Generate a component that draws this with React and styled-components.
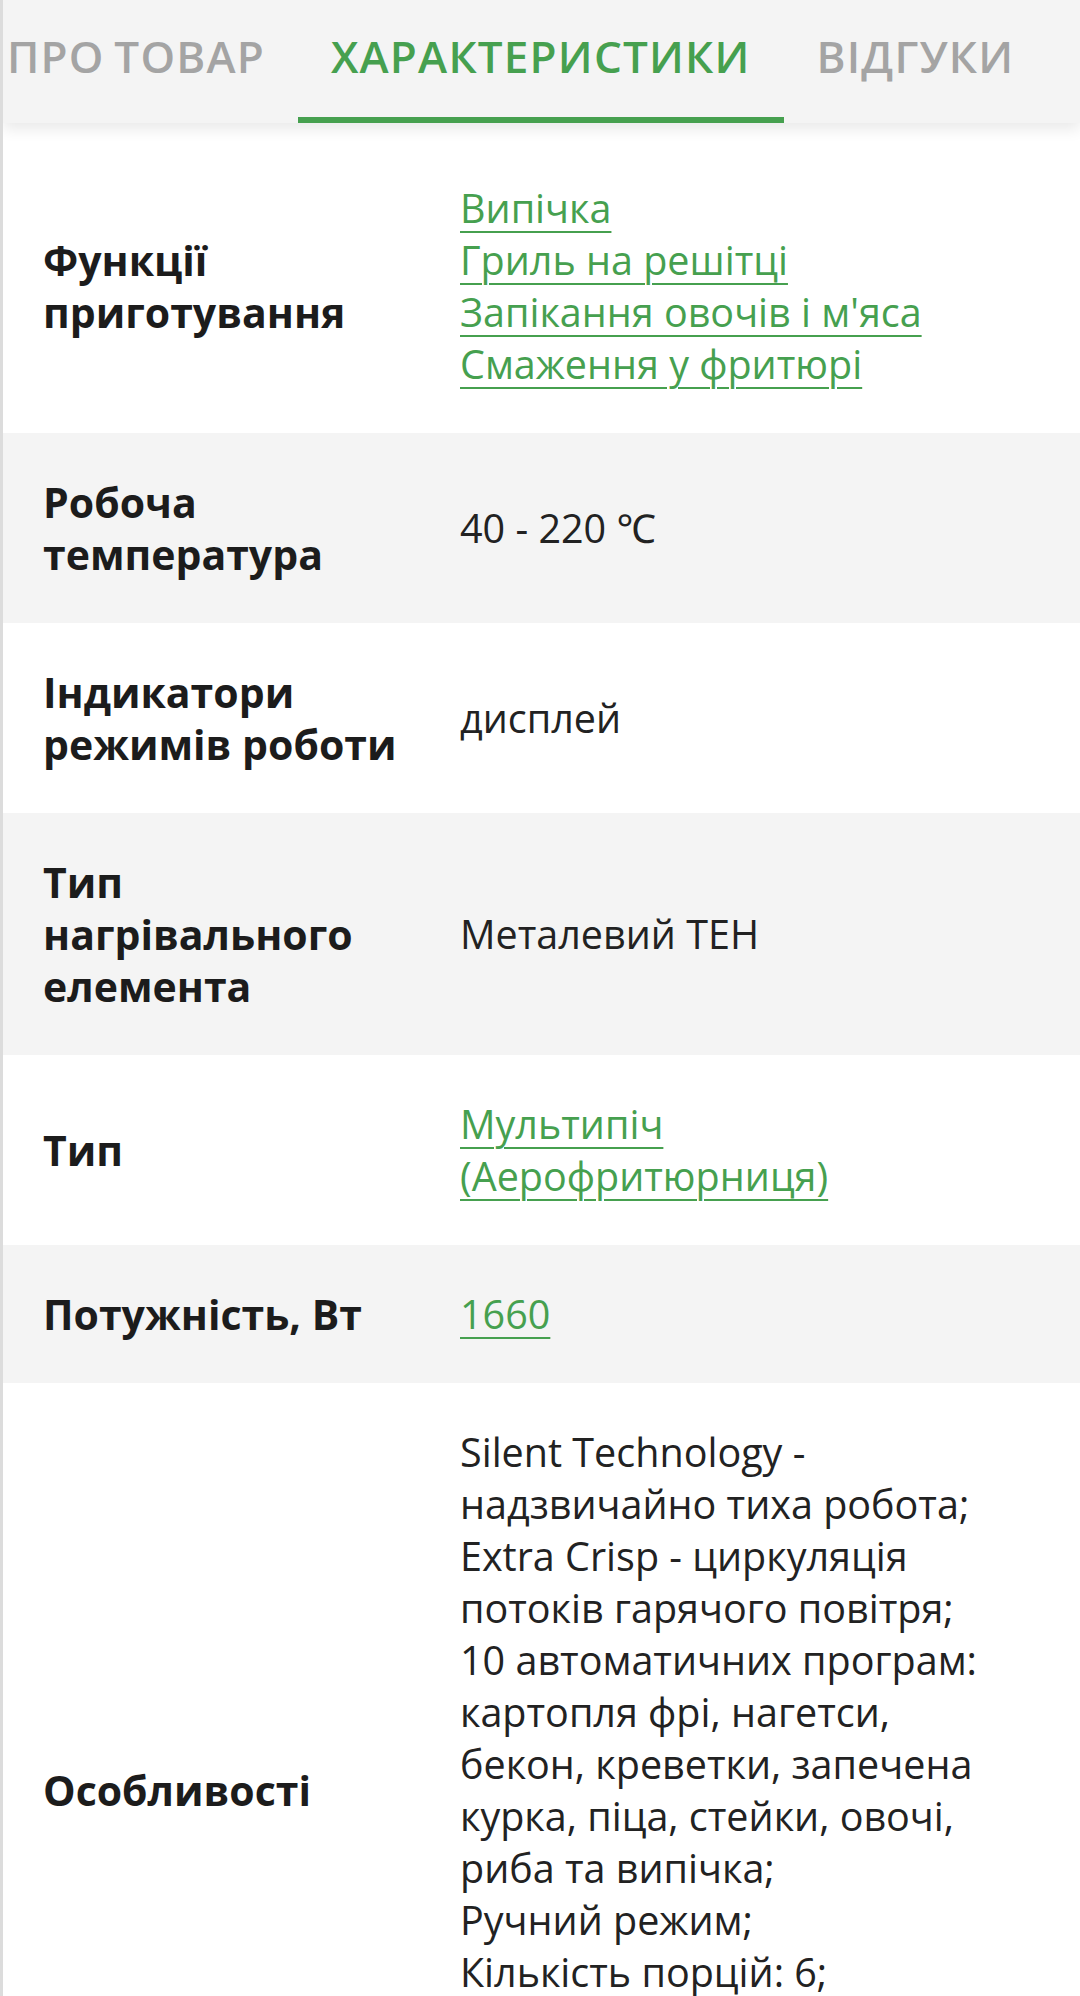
import React from 'react';
import styled, { createGlobalStyle } from 'styled-components';

const GlobalStyle = createGlobalStyle`
  html, body {
    margin: 0;
    padding: 0;
    background: #fff;
  }
  body {
    font-family: 'Open Sans', 'Noto Sans', sans-serif;
    color: #1f1f1f;
  }
`;

const tabs = ['Про товар', 'Характеристики', 'Відгуки'];

const specs = [
  {
    label: 'Функції приготування',
    links: ['Випічка', 'Гриль на решітці', "Запікання овочів і м'яса", 'Смаження у фритюрі'],
  },
  { label: 'Робоча температура', text: ['40 - 220 ℃'] },
  { label: 'Індикатори режимів роботи', text: ['дисплей'] },
  { label: 'Тип нагрівального елемента', text: ['Металевий ТЕН'] },
  { label: 'Тип', links: ['Мультипіч (Аерофритюрниця)'] },
  { label: 'Потужність, Вт', links: ['1660'] },
  {
    label: 'Особливості',
    text: [
      'Silent Technology - надзвичайно тиха робота;',
      'Extra Crisp - циркуляція потоків гарячого повітря;',
      '10 автоматичних програм: картопля фрі, нагетси, бекон, креветки, запечена курка, піца, стейки, овочі, риба та випічка;',
      'Ручний режим;',
      'Кількість порцій: 6;',
      'Таймер до 60 хвилин;',
      'Кошик з антипригарним покриттям;',
    ],
  },
];

export default function App() {
  return (
    <Page>
      <GlobalStyle />
      <TabBar>
        <TabStrip>
          {tabs.map((t, i) => (
            <Tab key={t} active={i === 1}>{t}</Tab>
          ))}
        </TabStrip>
      </TabBar>
      <SpecTable>
        {specs.map((row, i) => (
          <Row key={row.label} striped={i % 2 === 1}>
            <Label>{row.label}</Label>
            <Value>
              {row.links &&
                row.links.map((l) => (
                  <Link key={l} href="#">{l}</Link>
                ))}
              {row.text && row.text.map((t) => <Line key={t}>{t}</Line>)}
            </Value>
          </Row>
        ))}
      </SpecTable>
    </Page>
  );
}

const Page = styled.div`
  height: 1996px;
  border-left: 3px solid #dcdcdc;
  box-sizing: border-box;
  overflow: hidden;
`;

const TabBar = styled.nav`
  height: 123px;
  background: #f4f4f4;
  overflow: hidden;
  position: relative;
  box-shadow: 0 6px 14px rgba(0, 0, 0, 0.09);
  z-index: 1;
`;

const TabStrip = styled.div`
  display: flex;
  height: 100%;
  margin-left: -29px;
`;

const Tab = styled.div`
  display: flex;
  align-items: center;
  padding: 0 33px 6px;
  box-sizing: border-box;
  height: 100%;
  font-size: 44px;
  font-weight: 600;
  letter-spacing: 1.2px;
  word-spacing: -3px;
  text-transform: uppercase;
  white-space: nowrap;
  color: ${(p) => (p.active ? '#46a04f' : '#a4a4a4')};
  border-bottom: 6px solid ${(p) => (p.active ? '#46a04f' : 'transparent')};
`;

const SpecTable = styled.div`
  padding-top: 16px;
`;

const Row = styled.div`
  display: grid;
  grid-template-columns: 377px 1fr;
  column-gap: 40px;
  align-items: center;
  padding: 43px 85px 43px 40px;
  background: ${(p) => (p.striped ? '#f4f4f4' : '#fff')};
  font-size: 39.5px;
  line-height: 52px;
`;

const Label = styled.div`
  font-size: 41px;
  font-weight: 700;
  color: #1c1c1c;
`;

const Value = styled.div`
  display: flex;
  flex-direction: column;
  align-items: flex-start;
  color: #222;
`;

const Link = styled.a`
  color: #46a04f;
  text-decoration: underline;
  text-decoration-thickness: 2px;
  text-underline-offset: 8px;
`;

const Line = styled.span``;
